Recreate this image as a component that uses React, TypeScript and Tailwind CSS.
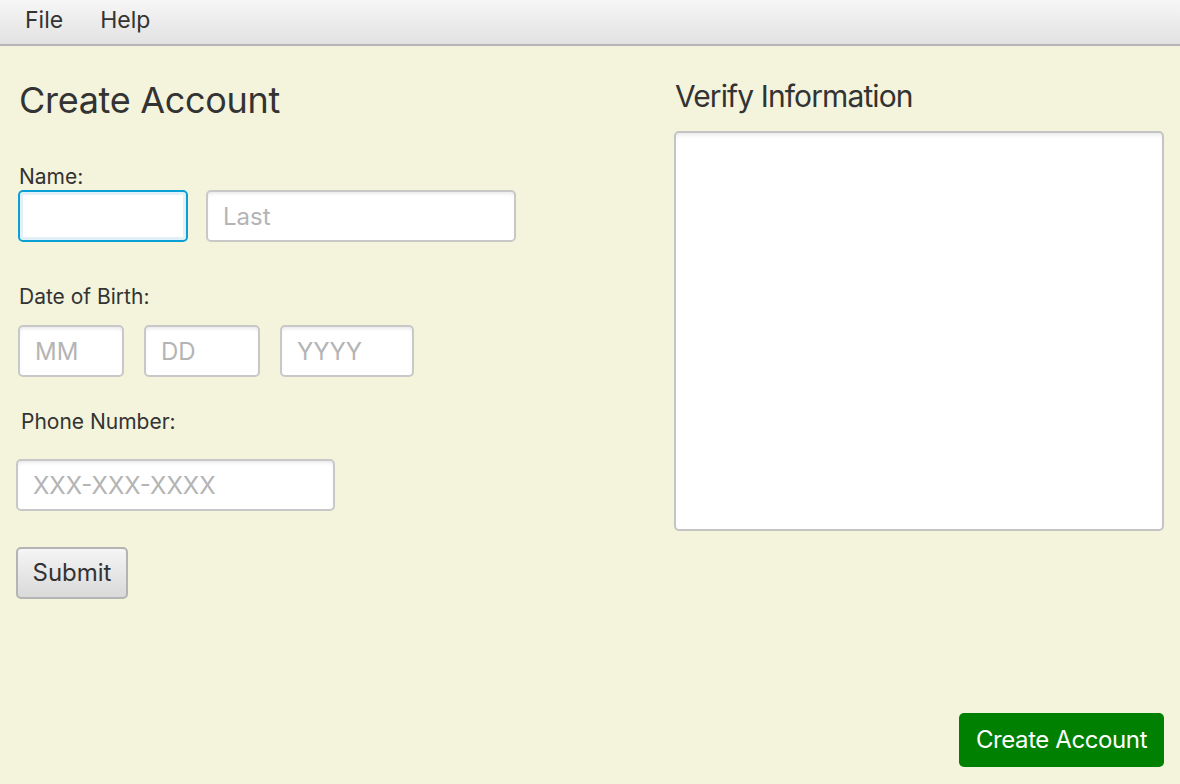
import React from "react";

const font = { fontFamily: "Inter, 'Noto Sans', 'Liberation Sans', sans-serif" };

function Field({ placeholder, className, focused }: { placeholder?: string; className: string; focused?: boolean }) {
  return (
    <input
      type="text"
      placeholder={placeholder}
      className={`h-[52px] rounded-[5px] bg-white px-[15px] text-[24px] text-[#333] outline-none placeholder:text-[#b4b4b4] ${
        focused
          ? "border-2 border-[#0aa0d6] shadow-[inset_0_0_0_3px_#e2f1f8]"
          : "border-2 border-[#c8c8c8] shadow-[inset_0_3px_4px_-2px_rgba(0,0,0,0.12)]"
      } ${className}`}
    />
  );
}

export default function App() {
  return (
    <div style={font} className="w-[1180px] h-[784px] flex flex-col bg-[#f4f4dc] text-[#333] overflow-hidden">
      <div className="h-[46px] shrink-0 flex items-center gap-[37px] px-[25px] pb-[4px] bg-gradient-to-b from-[#f6f6f6] to-[#e2e2e2] border-b-2 border-[#b5b5b5] text-[23px] text-[#333]">
        <span>File</span>
        <span>Help</span>
      </div>

      <div className="flex-1 flex">
        <div className="w-[674px] shrink-0 pl-[18px] pt-[28px]">
          <h1 className="text-[36px] leading-[52px] ml-[1px] tracking-[-0.3px] text-[#333]">Create Account</h1>
          <div className="mt-[39px] text-[21px] leading-[24px] ml-[1px]">Name:</div>
          <div className="flex gap-[18px] mt-[1px]">
            <Field className="w-[170px]" focused />
            <Field placeholder="Last" className="w-[310px]" />
          </div>
          <div className="mt-[43px] text-[21px] leading-[24px] ml-[1px]">Date of Birth:</div>
          <div className="flex gap-[20px] mt-[16px]">
            <Field placeholder="MM" className="w-[106px]" />
            <Field placeholder="DD" className="w-[116px]" />
            <Field placeholder="YYYY" className="w-[134px]" />
          </div>
          <div className="mt-[33px] text-[21px] leading-[24px] ml-[3px]">Phone Number:</div>
          <div className="mt-[25px] -ml-[2px]">
            <Field placeholder="XXX-XXX-XXXX" className="w-[319px]" />
          </div>
          <button className="mt-[36px] -ml-[2px] h-[52px] w-[112px] rounded-[5px] border-2 border-[#b4b4b4] bg-gradient-to-b from-[#f5f5f5] to-[#d9d9d9] text-[24px] text-[#333]">
            Submit
          </button>
        </div>

        <div className="flex-1 flex flex-col pr-[16px] pt-[28px]">
          <h2 className="text-[30px] leading-[44px] ml-[1px] tracking-[-0.9px] text-[#333]">Verify Information</h2>
          <textarea className="mt-[13px] w-[490px] h-[400px] resize-none rounded-[5px] border-2 border-[#c4c4c4] bg-white shadow-[inset_0_4px_5px_-3px_rgba(0,0,0,0.12)] outline-none" />
          <div className="flex-1" />
          <div className="flex justify-end pb-[17px]">
            <button className="h-[54px] w-[205px] rounded-[5px] bg-[#008000] text-white text-[24px] tracking-[-0.4px]">
              Create Account
            </button>
          </div>
        </div>
      </div>
    </div>
  );
}
